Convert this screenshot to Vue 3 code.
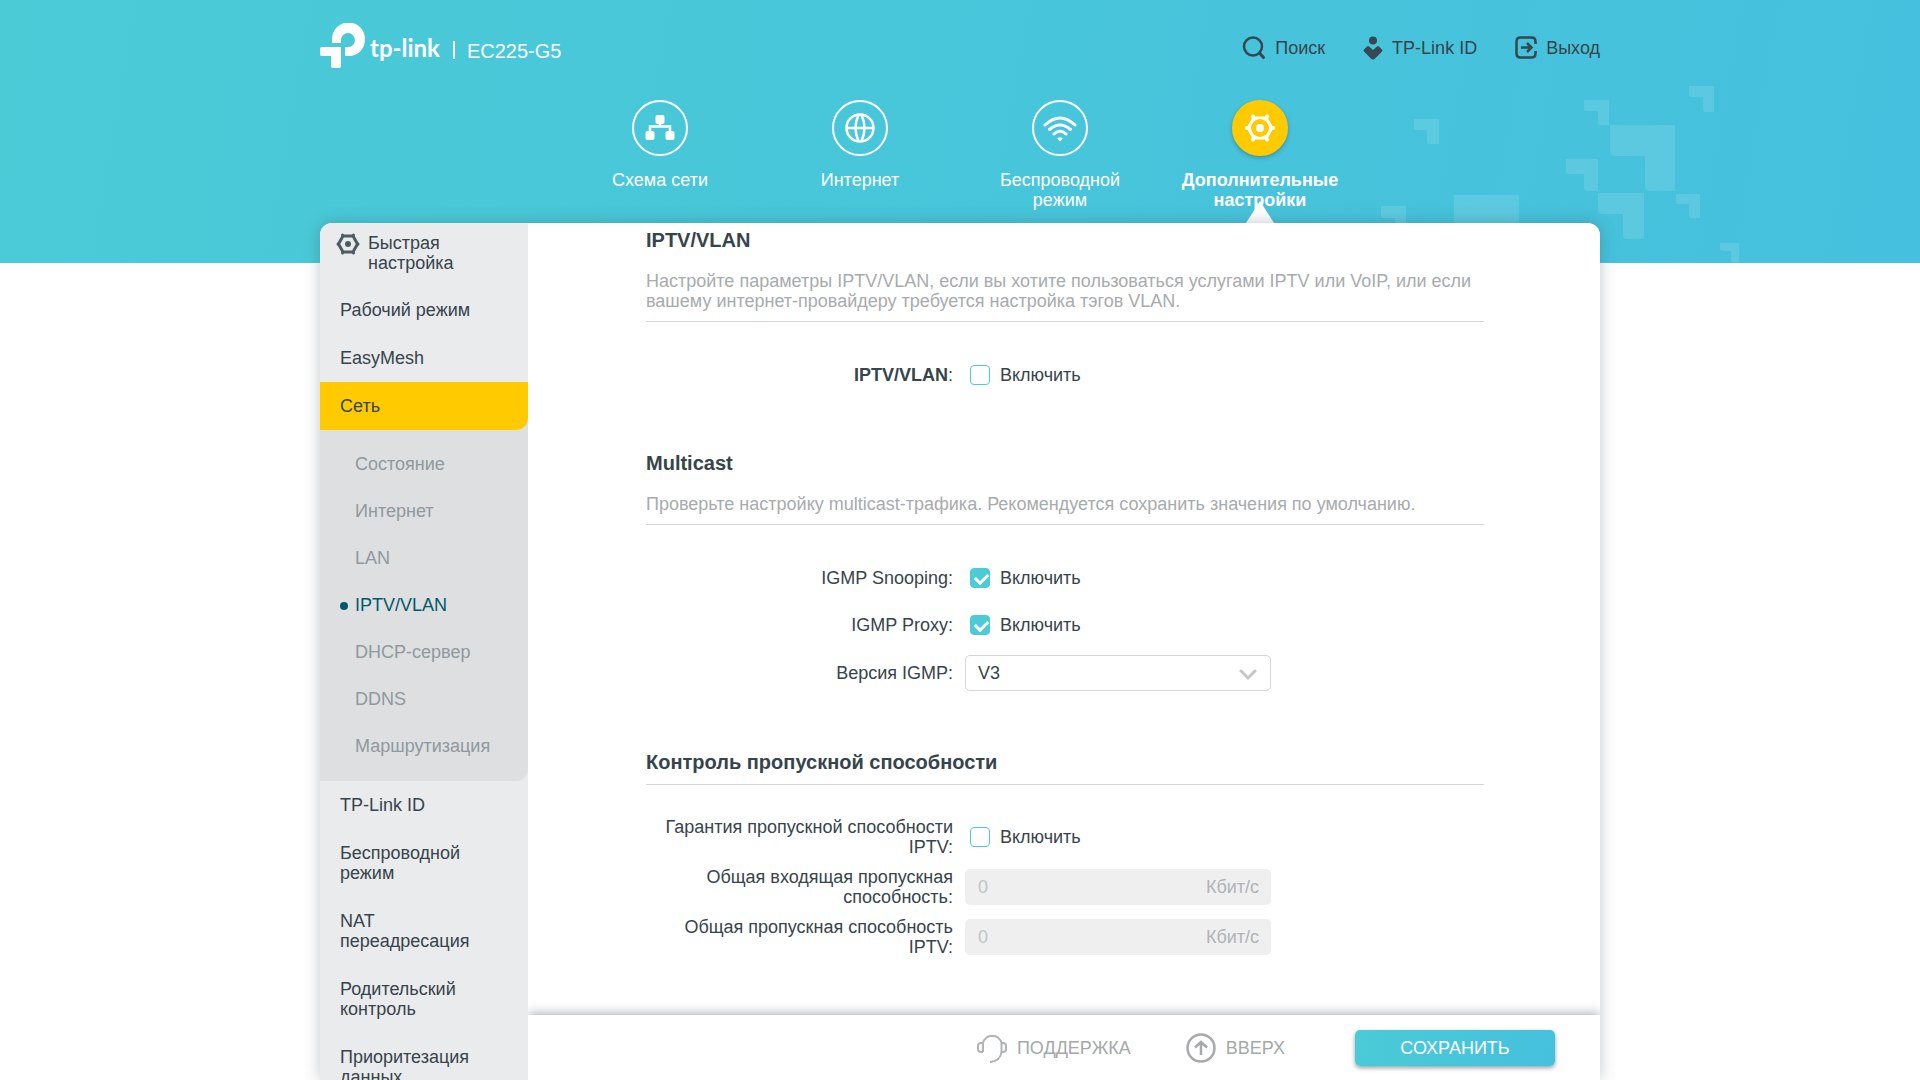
<script setup>
import { ref } from 'vue'

const tabs = [
  { id: 'map', label: 'Схема сети' },
  { id: 'internet', label: 'Интернет' },
  { id: 'wireless', label: 'Беспроводной режим' },
  { id: 'advanced', label: 'Дополнительные настройки' },
]
const activeTab = 'advanced'

const submenu = ['Состояние', 'Интернет', 'LAN', 'IPTV/VLAN', 'DHCP-сервер', 'DDNS', 'Маршрутизация']
const activeSub = 'IPTV/VLAN'
const lowerMenu = [
  'TP-Link ID',
  'Беспроводной режим',
  'NAT переадресация',
  'Родительский контроль',
  'Приоритезация данных',
]

const iptvEnabled = ref(false)
const igmpSnooping = ref(true)
const igmpProxy = ref(true)
const igmpVersion = ref('V3')
const guarantee = ref(false)
const totalInbound = ref('0')
const totalIptv = ref('0')
</script>

<template>
  <div class="page">
    <header class="header">
      <svg class="pattern" width="360" height="190" viewBox="1380 73 360 190" aria-hidden="true">
        <g fill="#fff" fill-opacity=".12">
          <path d="M1414 119h25v25h-10q-2 0-2-2v-12h-11q-2 0-2-2z" />
          <path d="M1584 100h25v25h-9q-2 0-2-2v-12h-12q-2 0-2-2z" />
          <path d="M1689 86h25v26h-9q-2 0-2-2v-13h-12q-2 0-2-2z" />
          <path d="M1610 125h65v66h-25q-5 0-5-5v-30h-29q-6 0-6-6z" />
          <path d="M1566 159h32v32h-11q-3 0-3-3v-14h-15q-3 0-3-3z" />
          <path d="M1598 193h46v46h-17q-4 0-4-4v-21h-21q-4 0-4-4z" />
          <path d="M1676 194h24v24h-9q-2 0-2-2v-12h-11q-2 0-2-2z" />
          <path d="M1720 243h19v19h-6q-2 0-2-2v-9h-9q-2 0-2-2z" />
          <path d="M1381 206h25v25h-9q-2 0-2-2v-11h-12q-2 0-2-2z" />
          <path d="M1454 195h65v66h-25q-5 0-5-5v-30h-29q-6 0-6-6z" />
        </g>
      </svg>

      <div class="wrap topbar">
        <a class="brand" href="#">
          <svg width="46" height="46" viewBox="0 0 46 46" aria-hidden="true" fill="#fff">
            <path d="M12 20V16a16.500 16.500 0 0 1 33 0c0 10-7 17-16 17h-4v-9h4a7 7 0 1 0-8-8v4z" />
            <path d="M2 24h19v19a2 2 0 0 1-2 2h-6a2 2 0 0 1-2-2V33H2a2 2 0 0 1-2-2v-5a2 2 0 0 1 2-2z" />
          </svg>
          <span class="wordmark">tp-link</span>
          <span class="divider"></span>
          <span class="model">EC225-G5</span>
        </a>
        <nav class="links">
          <a href="#">
            <svg width="24" height="24" viewBox="0 0 24 24" fill="none" stroke="#36474f" stroke-width="2.500" aria-hidden="true">
              <circle cx="11" cy="10.500" r="9" />
              <path d="M17.500 17l4 4.500" stroke-width="3" stroke-linecap="round" />
            </svg>
            Поиск
          </a>
          <a href="#">
            <svg width="20" height="24" viewBox="0 0 20 24" fill="#36474f" aria-hidden="true">
              <circle cx="10" cy="4.500" r="4" />
              <path d="M1 13.500l3-3q1-1 2 0l4 3.500 4-3.500q1-1 2 0l3 3q1 1 0 2l-7.500 7.500q-1.500 1-3 0L1 15.500q-1-1 0-2z" />
            </svg>
            TP-Link ID
          </a>
          <a href="#">
            <svg width="22" height="24" viewBox="0 0 22 24" fill="none" stroke="#36474f" stroke-width="2.500" aria-hidden="true">
              <path d="M20.500 8V5.500q0-4-4-4h-11q-4 0-4 4v12q0 4 4 4h11q4 0 4-4V15" />
              <path d="M6 11.500h11M12 7l4.500 4.500L12 16" />
            </svg>
            Выход
          </a>
        </nav>
      </div>

      <nav class="tabs">
        <a v-for="t in tabs" :key="t.id" href="#" class="tab" :class="{ active: t.id === activeTab }">
          <span class="disc">
            <svg v-if="t.id === 'map'" width="32" height="32" viewBox="0 0 32 32" aria-hidden="true">
              <g fill="#fff">
                <rect x="11.500" y="3" width="9" height="9" rx="2" />
                <rect x="1.500" y="19" width="9" height="9" rx="2" />
                <rect x="21.500" y="19" width="9" height="9" rx="2" />
              </g>
              <path d="M16 11v3.500M6 20v-5.500h20V20" fill="none" stroke="#fff" stroke-width="2.500" />
            </svg>
            <svg v-else-if="t.id === 'internet'" width="32" height="32" viewBox="0 0 32 32" fill="none" stroke="#fff" stroke-width="2.500" aria-hidden="true">
              <circle cx="16" cy="16" r="13.500" />
              <path d="M2.500 16h27M14.500 3q-6 13 0 26M17.500 3q6 13 0 26" />
            </svg>
            <svg v-else-if="t.id === 'wireless'" width="36" height="32" viewBox="0 0 36 32" fill="none" stroke="#fff" stroke-width="3" stroke-linecap="round" aria-hidden="true">
              <path d="M3 13Q18-1 33 13M7.500 17.500q10.500-9 21 0M12 22q6-5.500 12 0" />
              <path d="M16.500 26.500h3L18 28z" stroke-linejoin="round" stroke-width="2" fill="#fff" />
            </svg>
            <svg v-else width="32" height="32" viewBox="0 0 32 32" aria-hidden="true">
              <path d="M9 4.500h14L29.500 16 23 27.500H9L2.500 16z" fill="#fff" />
              <g fill="#fff">
                <circle cx="9" cy="4.500" r="2" /><circle cx="23" cy="4.500" r="2" />
                <circle cx="9" cy="27.500" r="2" /><circle cx="23" cy="27.500" r="2" />
                <circle cx="3" cy="16" r="2" /><circle cx="29" cy="16" r="2" />
              </g>
              <circle cx="16" cy="16" r="9" fill="#ffcb00" />
              <circle cx="16" cy="16" r="4" fill="#fff" />
            </svg>
          </span>
          <span class="tab-label">{{ t.label }}</span>
        </a>
      </nav>
    </header>

    <div class="wrap panel">
      <div class="panel-inner">
        <aside class="sidebar">
          <a href="#" class="item quick">
            <svg width="24" height="22" viewBox="0 0 24 22" fill="none" aria-hidden="true">
              <path d="M7 3h10l4.500 8-4.500 8H7L2.500 11z" stroke="#4c5c63" stroke-width="3" stroke-linejoin="round" />
              <g fill="#4c5c63">
                <circle cx="6.500" cy="2" r="1.500" /><circle cx="17.500" cy="2" r="1.500" />
                <circle cx="6.500" cy="20" r="1.500" /><circle cx="17.500" cy="20" r="1.500" />
                <circle cx="2" cy="11" r="1.500" /><circle cx="22" cy="11" r="1.500" />
                <circle cx="12" cy="11" r="3" />
              </g>
            </svg>
            <span>Быстрая настройка</span>
          </a>
          <a href="#" class="item">Рабочий режим</a>
          <a href="#" class="item">EasyMesh</a>
          <a href="#" class="sub-root"><span class="item current">Сеть</span></a>
          <div class="submenu">
            <a v-for="s in submenu" :key="s" href="#" :class="{ active: s === activeSub }">{{ s }}</a>
          </div>
          <a v-for="m in lowerMenu" :key="m" href="#" class="item">{{ m }}</a>
        </aside>

        <div class="column">
          <main class="content">
            <section>
              <h2>IPTV/VLAN</h2>
              <p class="desc">Настройте параметры IPTV/VLAN, если вы хотите пользоваться услугами IPTV или VoIP, или если вашему интернет-провайдеру требуется настройка тэгов VLAN.</p>
              <div class="rows">
                <div class="row">
                  <span class="label"><b>IPTV/VLAN</b>:</span>
                  <label class="check"><input v-model="iptvEnabled" type="checkbox" /> Включить</label>
                </div>
              </div>
            </section>

            <section>
              <h2>Multicast</h2>
              <p class="desc">Проверьте настройку multicast-трафика. Рекомендуется сохранить значения по умолчанию.</p>
              <div class="rows">
                <div class="row">
                  <span class="label">IGMP Snooping:</span>
                  <label class="check"><input v-model="igmpSnooping" type="checkbox" /> Включить</label>
                </div>
                <div class="row">
                  <span class="label">IGMP Proxy:</span>
                  <label class="check"><input v-model="igmpProxy" type="checkbox" /> Включить</label>
                </div>
                <div class="row tall">
                  <label class="label" for="igmp-version">Версия IGMP:</label>
                  <div class="field">
                    <select id="igmp-version" v-model="igmpVersion">
                      <option>V2</option>
                      <option>V3</option>
                    </select>
                    <svg class="chevron" width="18" height="12" viewBox="0 0 18 12" fill="none" stroke="#c4c7c9" stroke-width="3" stroke-linecap="round" aria-hidden="true">
                      <path d="M2 2l7 7 7-7" />
                    </svg>
                  </div>
                </div>
              </div>
            </section>

            <section>
              <h2 class="ruled">Контроль пропускной способности</h2>
              <div class="rows bandwidth">
                <div class="row">
                  <span class="label">Гарантия пропускной способности IPTV:</span>
                  <label class="check"><input v-model="guarantee" type="checkbox" /> Включить</label>
                </div>
                <div class="row">
                  <label class="label" for="total-in">Общая входящая пропускная способность:</label>
                  <div class="field unit">
                    <input id="total-in" v-model="totalInbound" type="text" disabled />
                    <span>Кбит/с</span>
                  </div>
                </div>
                <div class="row">
                  <label class="label" for="total-iptv">Общая пропускная способность IPTV:</label>
                  <div class="field unit">
                    <input id="total-iptv" v-model="totalIptv" type="text" disabled />
                    <span>Кбит/с</span>
                  </div>
                </div>
              </div>
            </section>
          </main>

          <footer class="actions">
            <a href="#">
              <svg width="30" height="30" viewBox="0 0 30 30" fill="none" stroke="#b1b4b6" stroke-width="2" aria-hidden="true">
                <path d="M6 19V10a9.500 9.500 0 0 1 18.500 0v9q-1 9-11.500 10" />
                <path d="M6 10H4q-3 0-3 3v3q0 3 3 3h2M24.500 10h1.500q3 0 3 3v3q0 3-3 3h-1.500" />
              </svg>
              ПОДДЕРЖКА
            </a>
            <a href="#">
              <svg width="30" height="30" viewBox="0 0 30 30" fill="none" stroke="#a7aaac" stroke-width="2.500" aria-hidden="true">
                <circle cx="15" cy="15" r="13.500" />
                <path d="M15 22V9M9 14.500L15 9l6 5.500" />
              </svg>
              ВВЕРХ
            </a>
            <button type="button">СОХРАНИТЬ</button>
          </footer>
        </div>
      </div>
    </div>
  </div>
</template>

<style>
body {
  background: #fff;
}
</style>

<style scoped>
* {
  box-sizing: border-box;
}

.page {
  height: 100vh;
  overflow: hidden;
  display: flex;
  flex-direction: column;
  font-family: "Liberation Sans", Arial, sans-serif;
  font-size: 18px;
  line-height: 20px;
  color: #36444b;
}

a {
  color: inherit;
  text-decoration: none;
}

svg {
  flex: none;
  display: block;
}

.wrap {
  width: 100%;
  max-width: 1280px;
  margin: 0 auto;
}

.header {
  position: relative;
  flex: none;
  height: 263px;
  background: linear-gradient(100deg, #4acbd6, #45c0de);
}

.pattern {
  position: absolute;
  left: calc(50% + 420px);
  bottom: 0;
}

.topbar {
  position: relative;
  display: flex;
  justify-content: space-between;
  padding-top: 23px;
  height: 100px;
}

.brand {
  display: flex;
  align-items: center;
  height: 46px;
  color: #fff;
}

.wordmark {
  margin-left: 4px;
  padding-top: 4px;
  font: 700 24px/32px Lato, sans-serif;
}

.divider {
  width: 2px;
  height: 18px;
  margin: 8px 12px 0 13px;
  background: #fff;
}

.model {
  margin-top: 10px;
  font-size: 20px;
}

.links {
  display: flex;
  gap: 38px;
  height: 50px;
  padding-top: 13px;
}

.links a {
  display: flex;
  gap: 9px;
  height: 24px;
  align-items: center;
}

.tabs {
  position: relative;
  display: flex;
  justify-content: center;
}

.tab {
  position: relative;
  width: 200px;
  display: flex;
  flex-direction: column;
  align-items: center;
  gap: 14px;
  color: #fff;
  text-align: center;
}

.disc {
  display: flex;
  align-items: center;
  justify-content: center;
  width: 56px;
  height: 56px;
  border: 2px solid #fff;
  border-radius: 50%;
}

.tab-label {
  width: 160px;
}

.active .disc {
  border-color: #ffcb00;
  background: #ffcb00;
  box-shadow: 0 2px 4px rgba(40, 70, 80, 0.4);
}

.active .tab-label {
  font-weight: 700;
}

.tab.active::after {
  content: "";
  position: absolute;
  top: 101px;
  border: 14px solid transparent;
  border-top: 0;
  border-bottom: 22px solid #fff;
}

.panel {
  position: relative;
  flex: 1;
  min-height: 0;
  margin-top: -40px;
  border-radius: 12px 12px 0 0;
  box-shadow: 0 0 16px rgba(54, 68, 75, 0.3);
}

.panel-inner {
  display: flex;
  height: 100%;
  overflow: hidden;
  border-radius: 12px 12px 0 0;
  background: #fff;
}

.sidebar {
  flex: none;
  width: 208px;
  overflow-y: auto;
  scrollbar-width: none;
  background: #eaebed;
}

.item {
  display: block;
  padding: 14px 40px 14px 20px;
}

.quick {
  display: flex;
  gap: 8px;
  padding: 10px 40px 13px 16px;
}

.sub-root {
  display: block;
  background: #dddfe1;
}

.current {
  background: #ffcb00;
  border-bottom-right-radius: 12px;
}

.submenu {
  padding: 11px 0;
  background: #dddfe1;
  border-bottom-right-radius: 12px;
}

.submenu a {
  position: relative;
  display: block;
  padding: 13px 20px 14px 35px;
  color: #8f999e;
}

.submenu a.active {
  color: #00596b;
}

.submenu a.active::before {
  content: "";
  position: absolute;
  left: 20px;
  top: 20px;
  width: 8px;
  height: 8px;
  border-radius: 50%;
  background: #00596b;
}

.column {
  flex: 1;
  min-width: 0;
  display: flex;
  flex-direction: column;
  overflow: hidden;
}

.content {
  flex: 1;
  min-height: 0;
  overflow-y: auto;
  scrollbar-width: none;
  padding: 5px 116px 0 118px;
}

h2 {
  margin: 0;
  font-size: 20px;
  line-height: 24px;
}

h2.ruled {
  padding-bottom: 10px;
  border-bottom: 1px solid #d4d6d8;
}

.desc {
  margin: 0;
  padding: 19px 0 10px;
  border-bottom: 1px solid #d4d6d8;
  color: #a8abad;
}

.rows {
  padding: 33px 0 49px;
}

.row {
  display: flex;
  align-items: center;
  min-height: 40px;
  margin-bottom: 7px;
}

.row.tall {
  min-height: 42px;
}

.label {
  width: 307px;
  padding-left: 16px;
  text-align: right;
}

.check {
  display: flex;
  align-items: center;
  gap: 10px;
  margin-left: 17px;
}

.check input {
  appearance: none;
  position: relative;
  width: 20px;
  height: 20px;
  margin: 0;
  border: 1px solid #4acbd6;
  border-radius: 4px;
  background: #fff;
}

.check input:checked {
  background: #4acbd6;
}

.check input:checked::after {
  content: "";
  position: absolute;
  left: 4px;
  top: 4px;
  width: 10px;
  height: 6px;
  border: solid #fff;
  border-width: 0 0 3px 3px;
  transform: rotate(-45deg);
}

.field {
  position: relative;
  width: 306px;
  margin-left: 12px;
}

.field select,
.field input {
  display: block;
  width: 100%;
  height: 36px;
  padding: 0 12px;
  font: inherit;
  color: inherit;
  background: #fff;
  border: 1px solid #d4d6d8;
  border-radius: 5px;
  appearance: none;
}

.chevron {
  position: absolute;
  right: 14px;
  top: 14px;
  pointer-events: none;
}

.unit {
  display: flex;
  align-items: center;
  padding-right: 12px;
  border-radius: 5px;
  background: #efefef;
  color: #b1b3b5;
}

.unit input {
  flex: 1;
  min-width: 0;
  border-color: transparent;
  background: none;
  color: #c1c4c6;
}

.bandwidth {
  padding: 32px 0 0;
}

.bandwidth .row {
  margin-bottom: 10px;
}

.actions {
  flex: none;
  display: flex;
  align-items: center;
  justify-content: flex-end;
  height: 65px;
  padding-right: 45px;
  background: #fff;
  box-shadow: 0 -2px 10px rgba(54, 68, 75, 0.4);
  color: #a5a8aa;
}

.actions a {
  display: flex;
  align-items: center;
  gap: 10px;
  margin-right: 55px;
}

.actions a + a {
  margin-right: 70px;
}

.actions button {
  width: 200px;
  height: 36px;
  border: 0;
  border-radius: 5px;
  background: linear-gradient(100deg, #4acbd6, #45c0de);
  box-shadow: 0 2px 4px rgba(40, 70, 80, 0.5);
  color: #fff;
  font: inherit;
}
</style>
